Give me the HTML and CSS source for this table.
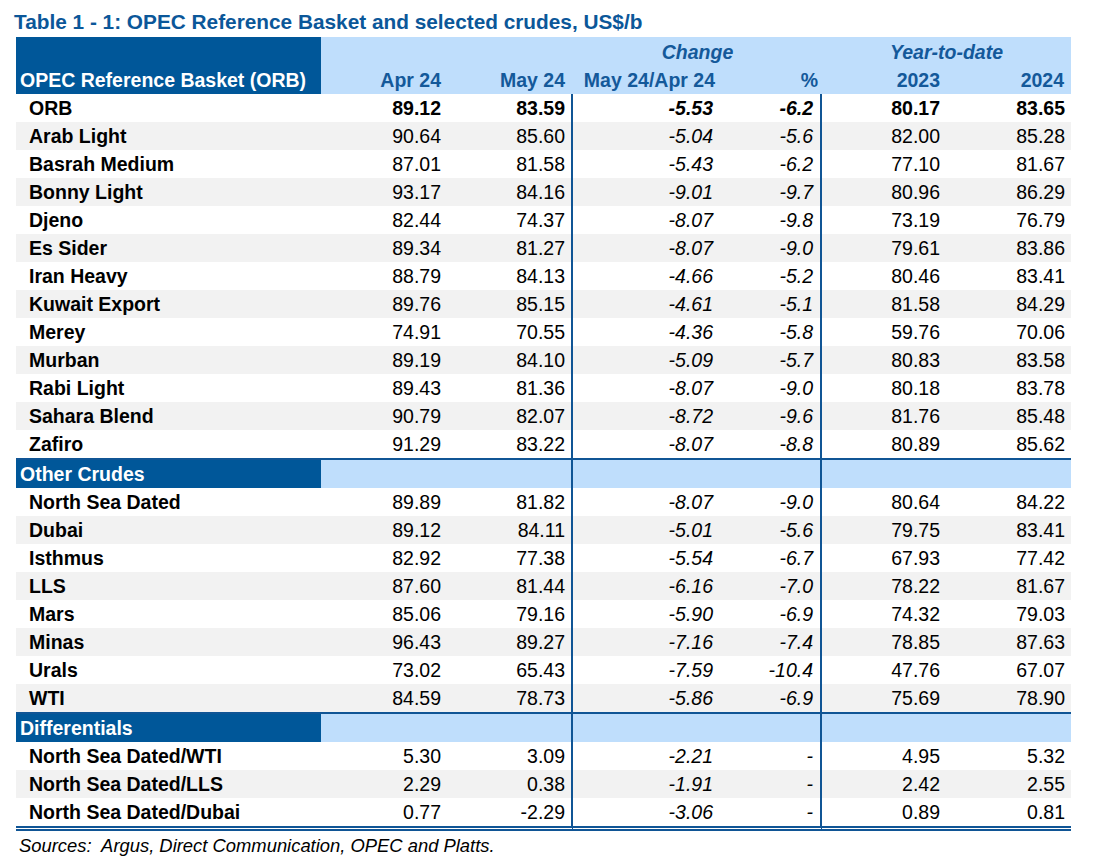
FILE: index.html
```html
<!DOCTYPE html>
<html lang="en">
<head>
<meta charset="utf-8">
<title>Table 1 - 1: OPEC Reference Basket and selected crudes, US$/b</title>
<link rel="stylesheet" href="styles.css">
</head>
<body>
<h1 class="title">Table 1 - 1: OPEC Reference Basket and selected crudes, US$/b</h1>
<div class="wrap">
<table class="basket">
  <colgroup>
    <col class="c-name"><col class="c-apr"><col class="c-may"><col class="c-chg"><col class="c-pct"><col class="c-y23"><col class="c-y24">
  </colgroup>
  <thead>
    <tr class="h1">
      <th class="hname" rowspan="2">OPEC Reference Basket (ORB)</th>
      <th class="hgroup" colspan="2"></th>
      <th class="hgroup" colspan="2">Change</th>
      <th class="hgroup" colspan="2">Year-to-date</th>
    </tr>
    <tr class="h2">
      <th class="hapr">Apr 24</th>
      <th class="hmay">May 24</th>
      <th class="hchg">May 24/Apr 24</th>
      <th class="hpct">%</th>
      <th class="hy23">2023</th>
      <th class="hy24">2024</th>
    </tr>
  </thead>
  <tbody>
    <tr class="row orb"><th>ORB</th><td class="apr">89.12</td><td class="may">83.59</td><td class="chg">-5.53</td><td class="pct">-6.2</td><td class="y23">80.17</td><td class="y24">83.65</td></tr>
    <tr class="row alt"><th>Arab Light</th><td class="apr">90.64</td><td class="may">85.60</td><td class="chg">-5.04</td><td class="pct">-5.6</td><td class="y23">82.00</td><td class="y24">85.28</td></tr>
    <tr class="row"><th>Basrah Medium</th><td class="apr">87.01</td><td class="may">81.58</td><td class="chg">-5.43</td><td class="pct">-6.2</td><td class="y23">77.10</td><td class="y24">81.67</td></tr>
    <tr class="row alt"><th>Bonny Light</th><td class="apr">93.17</td><td class="may">84.16</td><td class="chg">-9.01</td><td class="pct">-9.7</td><td class="y23">80.96</td><td class="y24">86.29</td></tr>
    <tr class="row"><th>Djeno</th><td class="apr">82.44</td><td class="may">74.37</td><td class="chg">-8.07</td><td class="pct">-9.8</td><td class="y23">73.19</td><td class="y24">76.79</td></tr>
    <tr class="row alt"><th>Es Sider</th><td class="apr">89.34</td><td class="may">81.27</td><td class="chg">-8.07</td><td class="pct">-9.0</td><td class="y23">79.61</td><td class="y24">83.86</td></tr>
    <tr class="row"><th>Iran Heavy</th><td class="apr">88.79</td><td class="may">84.13</td><td class="chg">-4.66</td><td class="pct">-5.2</td><td class="y23">80.46</td><td class="y24">83.41</td></tr>
    <tr class="row alt"><th>Kuwait Export</th><td class="apr">89.76</td><td class="may">85.15</td><td class="chg">-4.61</td><td class="pct">-5.1</td><td class="y23">81.58</td><td class="y24">84.29</td></tr>
    <tr class="row"><th>Merey</th><td class="apr">74.91</td><td class="may">70.55</td><td class="chg">-4.36</td><td class="pct">-5.8</td><td class="y23">59.76</td><td class="y24">70.06</td></tr>
    <tr class="row alt"><th>Murban</th><td class="apr">89.19</td><td class="may">84.10</td><td class="chg">-5.09</td><td class="pct">-5.7</td><td class="y23">80.83</td><td class="y24">83.58</td></tr>
    <tr class="row"><th>Rabi Light</th><td class="apr">89.43</td><td class="may">81.36</td><td class="chg">-8.07</td><td class="pct">-9.0</td><td class="y23">80.18</td><td class="y24">83.78</td></tr>
    <tr class="row alt"><th>Sahara Blend</th><td class="apr">90.79</td><td class="may">82.07</td><td class="chg">-8.72</td><td class="pct">-9.6</td><td class="y23">81.76</td><td class="y24">85.48</td></tr>
    <tr class="row"><th>Zafiro</th><td class="apr">91.29</td><td class="may">83.22</td><td class="chg">-8.07</td><td class="pct">-8.8</td><td class="y23">80.89</td><td class="y24">85.62</td></tr>

    <tr class="section"><th>Other Crudes</th><td class="sec-mid" colspan="2"></td><td class="sec-mid" colspan="2"></td><td class="sec-end" colspan="2"></td></tr>
    <tr class="row"><th>North Sea Dated</th><td class="apr">89.89</td><td class="may">81.82</td><td class="chg">-8.07</td><td class="pct">-9.0</td><td class="y23">80.64</td><td class="y24">84.22</td></tr>
    <tr class="row alt"><th>Dubai</th><td class="apr">89.12</td><td class="may">84.11</td><td class="chg">-5.01</td><td class="pct">-5.6</td><td class="y23">79.75</td><td class="y24">83.41</td></tr>
    <tr class="row"><th>Isthmus</th><td class="apr">82.92</td><td class="may">77.38</td><td class="chg">-5.54</td><td class="pct">-6.7</td><td class="y23">67.93</td><td class="y24">77.42</td></tr>
    <tr class="row alt"><th>LLS</th><td class="apr">87.60</td><td class="may">81.44</td><td class="chg">-6.16</td><td class="pct">-7.0</td><td class="y23">78.22</td><td class="y24">81.67</td></tr>
    <tr class="row"><th>Mars</th><td class="apr">85.06</td><td class="may">79.16</td><td class="chg">-5.90</td><td class="pct">-6.9</td><td class="y23">74.32</td><td class="y24">79.03</td></tr>
    <tr class="row alt"><th>Minas</th><td class="apr">96.43</td><td class="may">89.27</td><td class="chg">-7.16</td><td class="pct">-7.4</td><td class="y23">78.85</td><td class="y24">87.63</td></tr>
    <tr class="row"><th>Urals</th><td class="apr">73.02</td><td class="may">65.43</td><td class="chg">-7.59</td><td class="pct">-10.4</td><td class="y23">47.76</td><td class="y24">67.07</td></tr>
    <tr class="row alt"><th>WTI</th><td class="apr">84.59</td><td class="may">78.73</td><td class="chg">-5.86</td><td class="pct">-6.9</td><td class="y23">75.69</td><td class="y24">78.90</td></tr>

    <tr class="section"><th>Differentials</th><td class="sec-mid" colspan="2"></td><td class="sec-mid" colspan="2"></td><td class="sec-end" colspan="2"></td></tr>
    <tr class="row"><th>North Sea Dated/WTI</th><td class="apr">5.30</td><td class="may">3.09</td><td class="chg">-2.21</td><td class="pct">-</td><td class="y23">4.95</td><td class="y24">5.32</td></tr>
    <tr class="row alt"><th>North Sea Dated/LLS</th><td class="apr">2.29</td><td class="may">0.38</td><td class="chg">-1.91</td><td class="pct">-</td><td class="y23">2.42</td><td class="y24">2.55</td></tr>
    <tr class="row last"><th>North Sea Dated/Dubai</th><td class="apr">0.77</td><td class="may">-2.29</td><td class="chg">-3.06</td><td class="pct">-</td><td class="y23">0.89</td><td class="y24">0.81</td></tr>
  </tbody>
</table>
</div>
<p class="sources">Sources:&nbsp; Argus, Direct Communication, OPEC and Platts.</p>
</body>
</html>
```

FILE: styles.css
```css
body {
  margin: 0;
  background: #ffffff;
  color: #000000;
  font-family: "Liberation Sans", Arial, sans-serif;
}

.title {
  margin: 10px 0 0;
  padding-left: 14px;
  font-size: 20.8px;
  line-height: 24px;
  font-weight: bold;
  color: #0b5799;
}

.wrap {
  padding: 3px 0 0 16px;
}

.basket {
  border-collapse: separate;
  border-spacing: 0;
  table-layout: fixed;
  width: 1055px;
  font-size: 19.5px;
  line-height: 22px;
}

.c-name { width: 305px; }
.c-apr { width: 126px; }
.c-may { width: 126px; }
.c-chg { width: 147px; }
.c-pct { width: 102px; }
.c-y23 { width: 124px; }
.c-y24 { width: 125px; }

.basket th,
.basket td {
  padding: 0;
  white-space: nowrap;
  vertical-align: middle;
}

/* header */
.h1 { height: 28px; }
.h2 { height: 29px; }

.basket thead th {
  background: #bfdefc;
  color: #14599a;
  font-weight: bold;
  text-align: right;
}

.basket thead th.hname {
  background: #005799;
  color: #ffffff;
  text-align: left;
  vertical-align: bottom;
  padding: 0 0 3px 4px;
}

.basket thead th.hgroup {
  text-align: center;
  font-style: italic;
  padding-top: 2px;
}

.hapr { padding-right: 6px !important; }
.hmay { padding-right: 8px !important; }
.hchg { padding-right: 5px !important; }
.hpct { padding-right: 4px !important; }
.hy23 { padding-right: 6px !important; }
.hy24 { padding-right: 7px !important; }

.basket thead .h2 th { padding-top: 1px; }

/* body rows */
.row { height: 28px; }
.row.alt { background: #f2f2f2; }

.row th {
  text-align: left;
  font-weight: bold;
  padding-left: 13px;
}

.row td { text-align: right; }
.row .apr { padding-right: 6px; }
.row .may { padding-right: 6px; border-right: 2px solid #105595; }
.row .chg { padding-right: 7px; font-style: italic; }
.row .pct { padding-right: 7px; font-style: italic; border-right: 2px solid #105595; }
.row .y23 { padding-right: 6px; }
.row .y24 { padding-right: 6px; }

.row.orb td { font-weight: bold; }

/* section rows */
.section { height: 30px; }

.section th,
.section td {
  border-top: 2px solid #105595;
}

.section th {
  background: #005799;
  color: #ffffff;
  font-weight: bold;
  text-align: left;
  padding-left: 4px;
}

.section td { background: #bfdefc; }
.section .sec-mid { border-right: 2px solid #105595; }

/* last row */
.row.last { height: 33px; }
.row.last th,
.row.last td {
  border-bottom: 5px double #105595;
}

.sources {
  margin: 4px 0 0;
  padding-left: 19px;
  font-size: 18.4px;
  line-height: 22px;
  font-style: italic;
}
```
